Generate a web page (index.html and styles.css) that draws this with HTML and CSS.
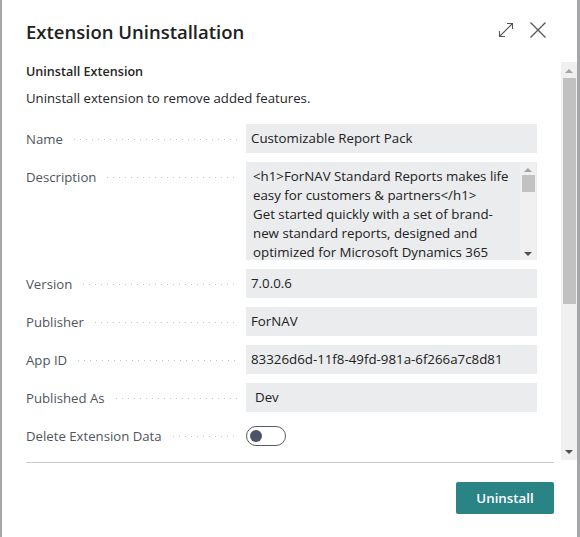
FILE: index.html
```html
<!DOCTYPE html>
<html lang="en">
<head>
<meta charset="utf-8">
<title>Extension Uninstallation</title>
<link rel="stylesheet" href="styles.css">
</head>
<body>
<div class="dialog">
  <header class="dlg-header">
    <h1 class="dlg-title">Extension Uninstallation</h1>
    <div class="dlg-actions">
      <svg class="icon-expand" width="18" height="18" viewBox="0 0 18 18" aria-hidden="true">
        <path d="M2.5 15.5 L15.5 2.5 M10 2.5 H15.5 V8 M2.5 10 V15.5 H8" fill="none" stroke="#555" stroke-width="1.1"/>
      </svg>
      <svg class="icon-close" width="18" height="18" viewBox="0 0 18 18" aria-hidden="true">
        <path d="M1.5 1.5 L16.5 16.5 M16.5 1.5 L1.5 16.5" fill="none" stroke="#5a5a5a" stroke-width="1.4"/>
      </svg>
    </div>
  </header>

  <div class="dlg-body">
    <div class="content">
      <div class="group-title">Uninstall Extension</div>
      <div class="instructions">Uninstall extension to remove added features.</div>

      <div class="fields">
        <div class="row">
          <div class="label"><span>Name</span><i class="leader"></i></div>
          <div class="field">Customizable Report Pack</div>
        </div>
        <div class="row row-top">
          <div class="label"><span>Description</span><i class="leader"></i></div>
          <div class="field field-multi">
            <div class="multi-text">&lt;h1&gt;ForNAV Standard Reports makes life<br>easy for customers &amp; partners&lt;/h1&gt;<br>Get started quickly with a set of brand-<br>new standard reports, designed and<br>optimized for Microsoft Dynamics 365</div>
            <div class="mini-scroll">
              <span class="arr-up small"></span>
              <span class="mini-thumb"></span>
              <span class="arr-down small"></span>
            </div>
          </div>
        </div>
        <div class="row">
          <div class="label"><span>Version</span><i class="leader"></i></div>
          <div class="field">7.0.0.6</div>
        </div>
        <div class="row">
          <div class="label"><span>Publisher</span><i class="leader"></i></div>
          <div class="field">ForNAV</div>
        </div>
        <div class="row">
          <div class="label"><span>App ID</span><i class="leader"></i></div>
          <div class="field">83326d6d-11f8-49fd-981a-6f266a7c8d81</div>
        </div>
        <div class="row">
          <div class="label"><span>Published As</span><i class="leader"></i></div>
          <div class="field field-option">Dev</div>
        </div>
        <div class="row row-toggle">
          <div class="label"><span>Delete Extension Data</span><i class="leader"></i></div>
          <div class="toggle"><span class="knob"></span></div>
        </div>
      </div>
    </div>
    <div class="page-scroll">
      <span class="arr-up"></span>
      <span class="page-thumb"></span>
      <span class="spacer"></span>
      <span class="arr-down"></span>
    </div>
  </div>

  <div class="divider"></div>

  <footer class="dlg-footer">
    <button class="btn-primary" type="button">Uninstall</button>
  </footer>
</div>
</body>
</html>
```

FILE: styles.css
```css
html, body {
  margin: 0;
  padding: 0;
}
body {
  width: 580px;
  height: 537px;
  overflow: hidden;
  background: #a4a6a8;
  font-family: "Open Sans", "Noto Sans", sans-serif;
  color: #212121;
}
.dialog {
  margin-left: 2px;
  width: 575px;
  height: 537px;
  background: #ffffff;
  display: flex;
  flex-direction: column;
}
.dlg-header {
  height: 62px;
  display: flex;
  align-items: flex-start;
  justify-content: space-between;
  padding: 0 30px 0 24px;
  box-sizing: border-box;
}
.dlg-title {
  margin: 19px 0 0 0;
  font-size: 18.5px;
  font-weight: 600;
  line-height: 26px;
  color: #212121;
}
.dlg-actions {
  display: flex;
  gap: 14px;
  margin-top: 21px;
}
.icon-expand, .icon-close {
  display: block;
}
.dlg-body {
  height: 398px;
  display: flex;
}
.content {
  flex: 1;
  padding: 0 7px 0 24px;
  overflow: hidden;
}
.group-title {
  font-size: 12.6px;
  font-weight: 600;
  line-height: 20px;
  color: #262626;
}
.instructions {
  margin-top: 6px;
  font-size: 13.2px;
  line-height: 20px;
  color: #262626;
}
.fields {
  margin-top: 16px;
  display: flex;
  flex-direction: column;
  gap: 9px;
}
.row {
  display: flex;
  align-items: center;
}
.row-top {
  align-items: flex-start;
}
.row-top .label {
  height: 29px;
}
.label {
  width: 220px;
  flex: none;
  display: flex;
  align-items: center;
  font-size: 13.2px;
  color: #4f5560;
}
.leader {
  flex: 1;
  height: 2px;
  margin: 2px 9px 0 11px;
  background-image: linear-gradient(to right, #c4c4c4 1.2px, transparent 1.2px);
  background-size: 6px 1.2px;
  background-repeat: repeat-x;
  background-position: left center;
}
.field {
  width: 291px;
  height: 29px;
  box-sizing: border-box;
  padding: 0 5px;
  background: #ebecee;
  font-size: 13.3px;
  line-height: 29px;
  color: #212121;
  white-space: nowrap;
  overflow: hidden;
}
.field-option {
  padding-left: 9px;
}
.field-multi {
  height: 98px;
  display: flex;
  padding: 0 1px 0 7px;
  line-height: normal;
}
.multi-text {
  flex: 1;
  padding-top: 5px;
  font-size: 13.3px;
  line-height: 19px;
  white-space: nowrap;
  overflow: hidden;
}
.mini-scroll {
  width: 16px;
  height: 98px;
  background: #f0f0f0;
  display: flex;
  flex-direction: column;
  align-items: center;
  box-sizing: border-box;
  padding: 6px 0 4px;
}
.mini-thumb {
  display: block;
  width: 13px;
  height: 17px;
  background: #c2c2c2;
  margin-top: 3px;
  flex: none;
}
.mini-scroll .arr-down {
  margin-top: auto;
}
.arr-up, .arr-down {
  display: block;
  width: 0;
  height: 0;
  border-left: 4px solid transparent;
  border-right: 4px solid transparent;
  flex: none;
}
.arr-up {
  border-bottom: 4px solid #a3a3a3;
}
.arr-down {
  border-top: 4px solid #505050;
}
.row-toggle {
  height: 30px;
}
.toggle {
  width: 40px;
  height: 20px;
  box-sizing: border-box;
  border: 1px solid #555b66;
  border-radius: 10px;
  display: flex;
  align-items: center;
  padding-left: 3px;
}
.knob {
  display: block;
  width: 12px;
  height: 12px;
  border-radius: 50%;
  background: #4c5366;
}
.page-scroll {
  width: 16px;
  flex: none;
  background: #f0f0f0;
  display: flex;
  flex-direction: column;
  align-items: center;
  box-sizing: border-box;
  padding: 7px 0 6px;
}
.page-thumb {
  display: block;
  width: 13px;
  height: 226px;
  margin-top: 5px;
  background: #c1c1c1;
}
.spacer {
  flex: 1;
}
.divider {
  margin: 2px 23px 0 24px;
  height: 1px;
  background: #cbcbcb;
}
.dlg-footer {
  display: flex;
  justify-content: flex-end;
  padding: 19px 23px 0 0;
}
.btn-primary {
  width: 98px;
  height: 32px;
  border: none;
  border-radius: 2px;
  background: #2a8385;
  color: #ffffff;
  font-family: "Open Sans", "Noto Sans", sans-serif;
  font-size: 13.3px;
  font-weight: 600;
  padding: 0;
}
```
